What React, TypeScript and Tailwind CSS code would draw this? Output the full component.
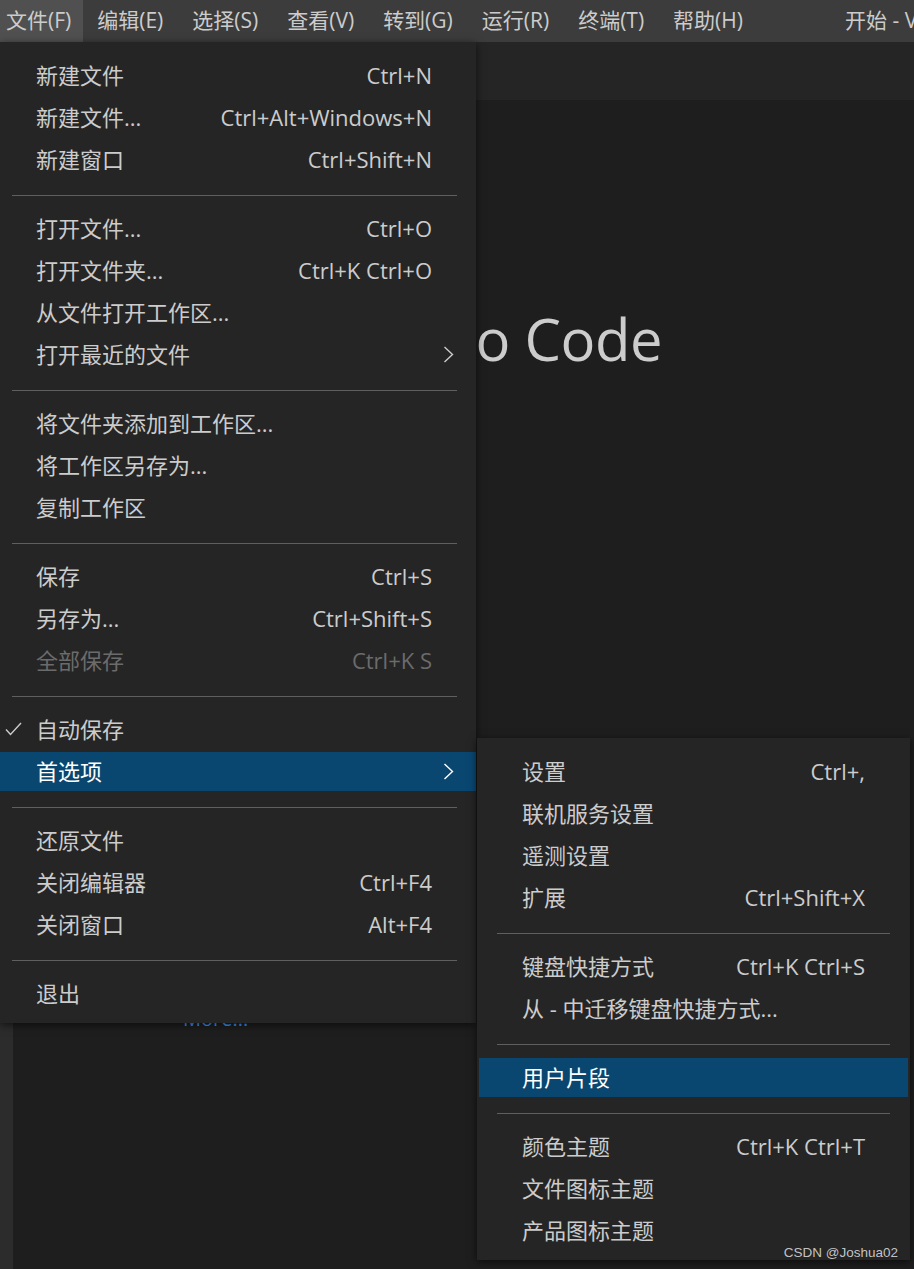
type Item = {
  label: string;
  keys?: string;
  sub?: boolean;
  checked?: boolean;
  disabled?: boolean;
  active?: boolean;
};

const fileMenu: Item[][] = [
  [
    { label: '新建文件', keys: 'Ctrl+N' },
    { label: '新建文件...', keys: 'Ctrl+Alt+Windows+N' },
    { label: '新建窗口', keys: 'Ctrl+Shift+N' },
  ],
  [
    { label: '打开文件...', keys: 'Ctrl+O' },
    { label: '打开文件夹...', keys: 'Ctrl+K Ctrl+O' },
    { label: '从文件打开工作区...' },
    { label: '打开最近的文件', sub: true },
  ],
  [{ label: '将文件夹添加到工作区...' }, { label: '将工作区另存为...' }, { label: '复制工作区' }],
  [
    { label: '保存', keys: 'Ctrl+S' },
    { label: '另存为...', keys: 'Ctrl+Shift+S' },
    { label: '全部保存', keys: 'Ctrl+K S', disabled: true },
  ],
  [
    { label: '自动保存', checked: true },
    { label: '首选项', sub: true, active: true },
  ],
  [{ label: '还原文件' }, { label: '关闭编辑器', keys: 'Ctrl+F4' }, { label: '关闭窗口', keys: 'Alt+F4' }],
  [{ label: '退出' }],
];

const prefMenu: Item[][] = [
  [
    { label: '设置', keys: 'Ctrl+,' },
    { label: '联机服务设置' },
    { label: '遥测设置' },
    { label: '扩展', keys: 'Ctrl+Shift+X' },
  ],
  [{ label: '键盘快捷方式', keys: 'Ctrl+K Ctrl+S' }, { label: '从 - 中迁移键盘快捷方式...' }],
  [{ label: '用户片段', active: true }],
  [{ label: '颜色主题', keys: 'Ctrl+K Ctrl+T' }, { label: '文件图标主题' }, { label: '产品图标主题' }],
];

const menubar = ['文件(F)', '编辑(E)', '选择(S)', '查看(V)', '转到(G)', '运行(R)', '终端(T)', '帮助(H)'];

function Chevron({ active }: { active?: boolean }) {
  return (
    <svg width="11" height="17" viewBox="0 0 11 17" fill="none">
      <path d="M1.5 1 L9.5 8.5 L1.5 16" stroke={active ? '#ffffff' : '#cccccc'} strokeWidth="1.4" />
    </svg>
  );
}

function Check() {
  return (
    <svg width="17" height="14" viewBox="0 0 17 14" fill="none">
      <path d="M1 7.5 L5.5 12.5 L16 1" stroke="#cccccc" strokeWidth="1.4" />
    </svg>
  );
}

function Row({ item, sub }: { item: Item; sub?: boolean }) {
  const text = item.active ? 'text-white' : item.disabled ? 'text-[#6b6b6b]' : 'text-[#cccccc]';
  return (
    <div className="h-[42px] py-[1.5px]">
      <div className={`h-full flex items-center ${item.active ? 'bg-[#094771]' : ''} ${text}`}>
        <div className={`${sub ? 'w-[43px]' : 'w-[36px]'} shrink-0 flex items-center pl-[5px]`}>
          {item.checked && <Check />}
        </div>
        <div className="flex-1 whitespace-nowrap">{item.label}</div>
        {item.keys && <div className="whitespace-nowrap">{item.keys}</div>}
        <div className={`${sub ? 'w-[43px]' : 'w-[44px]'} shrink-0 flex items-center pl-[11px]`}>
          {item.sub && <Chevron active={item.active} />}
        </div>
      </div>
    </div>
  );
}

function Menu({ groups, sub }: { groups: Item[][]; sub?: boolean }) {
  return (
    <div className="pt-[12px] pb-[9px] text-[22px]">
      {groups.map((g, gi) => (
        <div key={gi}>
          {gi > 0 && (
            <div className={`pt-[15px] pb-[11px] ${sub ? 'mx-[20px]' : 'ml-[12px] mr-[19px]'}`}>
              <div className="h-px bg-[#5f5f5f]" />
            </div>
          )}
          <div className={sub ? 'px-[2px]' : ''}>
            {g.map((it) => (
              <Row key={it.label} item={it} sub={sub} />
            ))}
          </div>
        </div>
      ))}
    </div>
  );
}

export default function App() {
  return (
    <div className="relative w-[914px] h-[1269px] overflow-hidden bg-[#1e1e1e] text-[21px] font-['Open_Sans','Noto_Sans_CJK_SC',sans-serif] flex flex-col">
      {/* title bar */}
      <div className="h-[42px] shrink-0 bg-[#3c3c3c] flex items-stretch text-[#cccccc] overflow-hidden">
        <div className="w-[845px] shrink-0 flex items-stretch">
          {menubar.map((m, i) => (
            <div
              key={m}
              className={`flex items-center whitespace-nowrap ${i === 0 ? 'pl-[6px] pr-[11.5px] bg-[#505050]' : 'px-[14.5px]'}`}
            >
              {m}
            </div>
          ))}
        </div>
        <div className="flex items-center whitespace-nowrap">开始 - Visual Studio Code</div>
      </div>

      {/* workbench */}
      <div className="flex-1 flex">
        <div className="w-[13px] shrink-0 bg-[#2c2c2c]" />
        <div className="flex-1 flex flex-col">
          <div className="h-[58px] shrink-0 bg-[#252526]" />
          <div className="flex-1 bg-[#1e1e1e]">
            <div className="mt-[210px] w-[649px] text-right text-[58px] leading-none text-[#cccccc] whitespace-nowrap tracking-[-0.5px]">
              Visual Studio Code
            </div>
            <div className="mt-[641px] pl-[170px] text-[20px] leading-[20px] text-[#3794ff]">More...</div>
          </div>
        </div>
      </div>

      {/* file menu */}
      <div className="absolute left-0 top-[42px] w-[476px] bg-[#252526] shadow-[0_2px_8px_rgba(0,0,0,0.6)]">
        <Menu groups={fileMenu} />
      </div>

      {/* preferences submenu */}
      <div className="absolute left-[477px] top-[738px] w-[433px] bg-[#252526] shadow-[0_2px_8px_rgba(0,0,0,0.6)]">
        <Menu groups={prefMenu} sub />
      </div>

      <div className="absolute right-[16px] bottom-[6px] text-[13.5px] leading-[20px] text-[#d8d8d8]/90 font-['Liberation_Sans',Arial,sans-serif]">
        CSDN @Joshua02
      </div>
    </div>
  );
}
